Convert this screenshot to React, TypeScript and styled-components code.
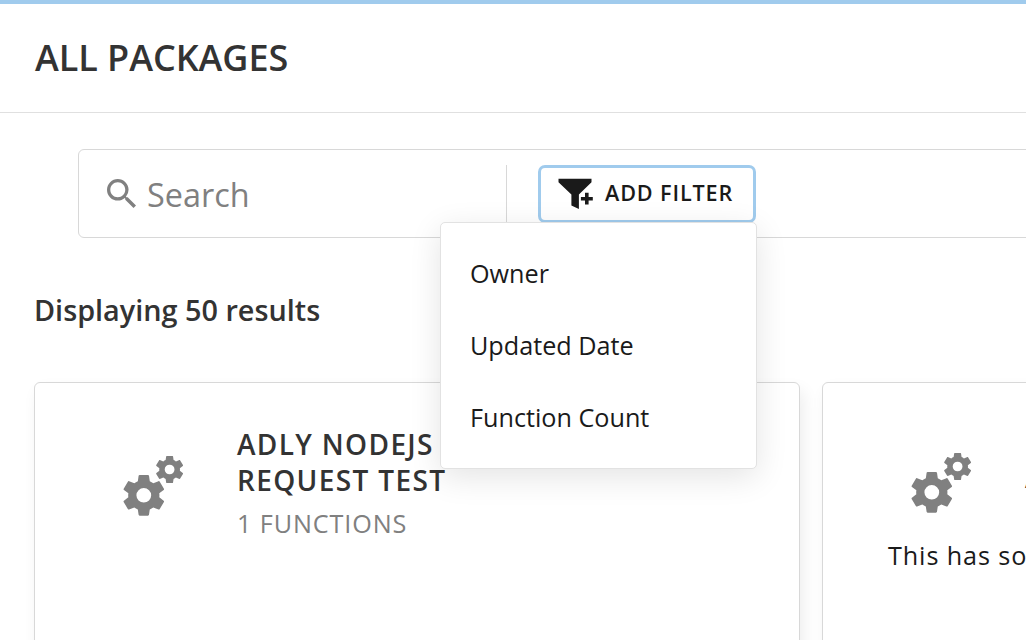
import React from "react";
import styled, { createGlobalStyle } from "styled-components";

const GlobalStyle = createGlobalStyle`
  * { box-sizing: border-box; }
  body {
    margin: 0;
    overflow: hidden;
    background: #fff;
    color: #1a1a1a;
    font-family: "Open Sans", "Liberation Sans", sans-serif;
  }
`;

const Page = styled.div`
  height: 640px;
  overflow: hidden;
  border-top: 4px solid #a0cbed;
`;

const Header = styled.header`
  height: 109px;
  padding: 30px 35px 0;
  border-bottom: 1px solid #e0e0e0;
`;

const Title = styled.h1`
  margin: 0;
  font-size: 36px;
  line-height: 48px;
  font-weight: 600;
  letter-spacing: -0.05px;
  color: #333;
  white-space: nowrap;
`;

const Toolbar = styled.div`
  display: flex;
  width: 1100px;
  height: 89px;
  margin: 36px 0 0 78px;
  padding-top: 15px;
  border: 1px solid #d8d8d8;
  border-radius: 6px;
`;

const SearchField = styled.label`
  display: flex;
  align-items: flex-start;
  width: 428px;
  height: 58px;
  padding-left: 28px;
  border-right: 1px solid #d8d8d8;
  color: #808080;

  svg { margin-top: 14px; }
`;

const SearchText = styled.span`
  margin-left: 11px;
  font-size: 32.4px;
  line-height: 58px;
`;

const FilterAnchor = styled.div`
  position: relative;
  margin-left: 31px;
`;

const FilterButton = styled.button`
  display: flex;
  width: 218px;
  height: 58px;
  padding: 0 0 0 17px;
  border: 3px solid #a0cbed;
  border-radius: 7px;
  background: #fff;
  color: #1a1a1a;
  font: 600 21.6px/50px "Open Sans", "Liberation Sans", sans-serif;
  letter-spacing: 0.88px;
  white-space: nowrap;

  svg { flex: none; margin: 10px 12px 0 0; }
`;

const Menu = styled.ul`
  position: absolute;
  z-index: 2;
  top: 57px;
  right: -1px;
  width: 317px;
  height: 247px;
  margin: 0;
  padding: 14px 0;
  list-style: none;
  background: #fff;
  border: 1px solid #e2e2e2;
  border-radius: 5px;
  box-shadow: 0 8px 32px rgba(0, 0, 0, 0.11);
`;

const MenuItem = styled.li`
  height: 72px;
  padding-left: 29px;
  font-size: 25.2px;
  line-height: 72px;
`;

const ResultCount = styled.p`
  margin: 53px 0 1px 34px;
  font-size: 28.8px;
  line-height: 38px;
  font-weight: 600;
  color: #333;
`;

const CardRow = styled.main`
  display: grid;
  grid-template-columns: 766px 766px;
  gap: 22px;
  padding: 52px 0 0 34px;
`;

const Card = styled.article`
  height: 400px;
  padding: 43px 65px;
  background: #fff;
  border: 1px solid #d8d8d8;
  border-radius: 6px;
  box-shadow: 4px 8px 16px rgba(0, 0, 0, 0.07);
`;

const CardHead = styled.div<{ $height: number }>`
  display: flex;
  align-items: center;
  height: ${(p) => p.$height}px;
  padding-left: 23px;
`;

const CardInfo = styled.div`
  margin-left: 53px;
  padding-bottom: 3px;
  white-space: nowrap;
`;

const CardTitle = styled.h2`
  display: flex;
  flex-direction: column;
  justify-content: flex-end;
  min-height: 72px;
  margin: 0;
  font-size: 28px;
  line-height: 36px;
  font-weight: 600;
  letter-spacing: 1.35px;
  color: #333;
`;

const CardMeta = styled.div`
  margin-top: 5px;
  font-size: 25.2px;
  line-height: 40px;
  letter-spacing: 0.9px;
  color: #808080;
`;

const CardText = styled.p`
  margin: -2px 0 0;
  font-size: 25.2px;
  line-height: 36px;
  letter-spacing: 0.9px;
  white-space: nowrap;
`;

const GEAR =
  "M19.14 12.94c.04-.3.06-.61.06-.94 0-.32-.02-.64-.07-.94l2.03-1.58c.18-.14.23-.41.12-.61l-1.92-3.32c-.12-.22-.37-.29-.59-.22l-2.39.96c-.5-.38-1.03-.7-1.62-.94l-.36-2.54c-.04-.24-.24-.41-.48-.41h-3.84c-.24 0-.43.17-.47.41l-.36 2.54c-.59.24-1.13.57-1.62.94l-2.39-.96c-.22-.08-.47 0-.59.22L2.74 8.87c-.12.21-.08.47.12.61l2.03 1.58c-.05.3-.09.63-.09.94s.02.64.07.94l-2.03 1.58c-.18.14-.23.41-.12.61l1.92 3.32c.12.22.37.29.59.22l2.39-.96c.5.38 1.03.7 1.62.94l.36 2.54c.05.24.24.41.48.41h3.84c.24 0 .44-.17.47-.41l.36-2.54c.59-.24 1.13-.56 1.62-.94l2.39.96c.22.08.47 0 .59-.22l1.92-3.32c.12-.22.07-.47-.12-.61l-2.01-1.58zM12 15.4a3.4 3.4 0 1 1 0-6.8a3.4 3.4 0 0 1 0 6.8z";

const GearsIcon = () => (
  <svg width="61" height="60" viewBox="0 0 61 60" fill="#808080">
    <path d={GEAR} transform="translate(20.8 39.3) scale(2.17 2.12) translate(-12 -12)" />
    <path d={GEAR} transform="translate(46.6 13.5) scale(1.44 1.41) translate(-12 -12)" />
  </svg>
);

const SearchIcon = () => (
  <svg width="29" height="29" viewBox="3 3 17.49 17.49" fill="currentColor">
    <path d="M15.5 14h-.79l-.28-.27A6.471 6.471 0 0 0 16 9.5 6.5 6.5 0 1 0 9.5 16c1.61 0 3.09-.59 4.23-1.57l.27.28v.79l5 4.99L20.49 19l-4.99-5zm-6 0C7.01 14 5 11.99 5 9.5S7.01 5 9.5 5 14 7.01 14 9.5 11.99 14 9.5 14z" />
  </svg>
);

const FilterAddIcon = () => (
  <svg width="35" height="32" viewBox="0 0 35 32" fill="currentColor">
    <path d="M.5 .8h33v3.4L20.9 16.5V31L13.4 27.6V16.5L.5 4.2z" />
    <path d="M27 14.8h3.6v4.1h4.2v3.5h-4.2v4.1H27v-4.1h-4.1v-3.5H27z" />
  </svg>
);

const filters = ["Owner", "Updated Date", "Function Count"];

export default function App() {
  return (
    <>
      <GlobalStyle />
      <Page>
        <Header>
          <Title>ALL PACKAGES</Title>
        </Header>
        <Toolbar>
          <SearchField>
            <SearchIcon />
            <SearchText>Search</SearchText>
          </SearchField>
          <FilterAnchor>
            <FilterButton>
              <FilterAddIcon />
              ADD FILTER
            </FilterButton>
            <Menu>
              {filters.map((name) => (
                <MenuItem key={name}>{name}</MenuItem>
              ))}
            </Menu>
          </FilterAnchor>
        </Toolbar>
        <ResultCount>Displaying 50 results</ResultCount>
        <CardRow>
          <Card>
            <CardHead $height={120}>
              <GearsIcon />
              <CardInfo>
                <CardTitle>
                  <span>ADLY NODEJS</span>
                  <span>REQUEST TEST</span>
                </CardTitle>
                <CardMeta>1 FUNCTIONS</CardMeta>
              </CardInfo>
            </CardHead>
          </Card>
          <Card>
            <CardHead $height={113}>
              <GearsIcon />
              <CardInfo>
                <CardTitle>A</CardTitle>
                <CardMeta>1</CardMeta>
              </CardInfo>
            </CardHead>
            <CardText>This has so</CardText>
          </Card>
        </CardRow>
      </Page>
    </>
  );
}
